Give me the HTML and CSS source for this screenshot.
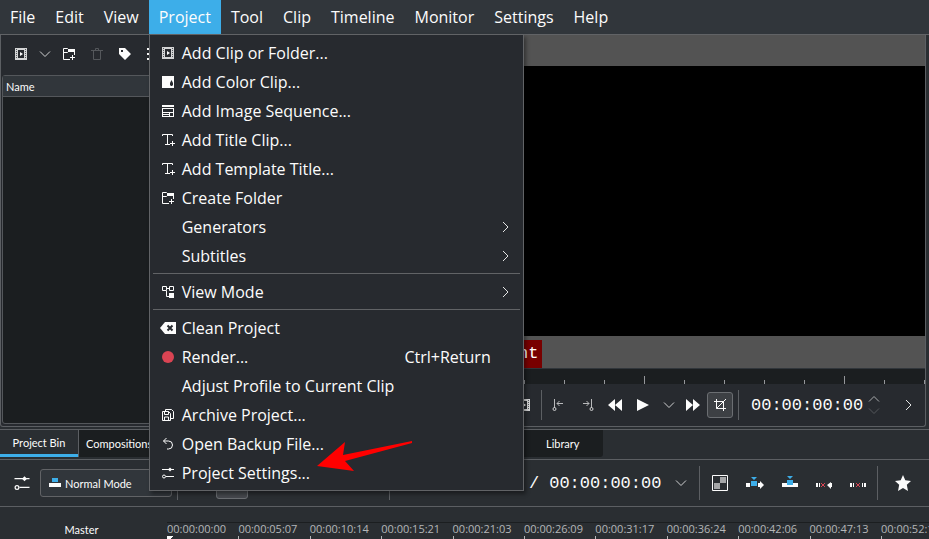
FILE: index.html
```
<!DOCTYPE html>
<html lang="en">
<head>
    <meta charset="UTF-8">
    <meta name="viewport" content="width=device-width, initial-scale=1.0">
    <title>Video Editor</title>
    <link rel="stylesheet" href="styles.css">
</head>
<body>

<!-- Shared icons -->
<svg class="sprite" aria-hidden="true">
    <symbol id="film" viewBox="0 0 16 16">
        <path fill="#d4d5d6" fill-rule="evenodd" d="M2 2h12v12H2zM5 4v8h6V4z"/>
        <path stroke="#55585c" stroke-dasharray="1 1" d="M3.500 3v10M12.500 3v10"/>
        <path fill="#fcfcfc" d="M7 6l3 2-3 2z"/>
    </symbol>
    <symbol id="color" viewBox="0 0 16 16">
        <path fill="#fcfcfc" d="M2 2h12v12H2z"/>
        <path fill="#272a2f" d="M11.500 6l1.500 3v2l-1 1h-1l-1-1V9z"/>
    </symbol>
    <symbol id="sequence" viewBox="0 0 16 16">
        <path fill="#fcfcfc" fill-rule="evenodd" d="M2 2h12v2H2zM2 5h12v9H2zM3 6v3h10V6zM3 10v1h6v-1zM3 12v1h6v-1zM10 10v3h3v-3z"/>
    </symbol>
    <symbol id="title" viewBox="0 0 16 16">
        <path fill="none" stroke="#fcfcfc" d="M2.500 4V2.500h10V4M7.500 2.500v10M5 12.500h5M12.500 9v5M10 11.500h5"/>
    </symbol>
    <symbol id="folder" viewBox="0 0 16 16">
        <path fill="none" stroke="#fcfcfc" d="M9 13.500H2.500v-11h4l2 2h5V9M2.500 6.500h4l2-2M11.500 9v5M9 11.500h5"/>
        <path fill="#fcfcfc" d="M7 3h7v3H7z"/>
    </symbol>
    <symbol id="tree" viewBox="0 0 16 16">
        <path fill="none" stroke="#fcfcfc" d="M2.500 2.500h4v4h-4zM9.500 2.500h4v4h-4zM6.500 4.500h3M6.500 7v5.500h3"/>
        <path fill="#fcfcfc" d="M9 9h5v5H9z"/>
    </symbol>
    <symbol id="clean" viewBox="0 0 16 16">
        <path fill="#fcfcfc" d="M0 8l5-6h11v12H5z"/>
        <path stroke="#272a2f" stroke-width="2" d="M7.500 5.500l5 5M12.500 5.500l-5 5"/>
    </symbol>
    <symbol id="record" viewBox="0 0 16 16"><circle cx="8" cy="8" r="6" fill="#da4453"/></symbol>
    <symbol id="archive" viewBox="0 0 16 16">
        <path fill="none" stroke="#fcfcfc" d="M2.500 4.500h6l2 2v7h-8zM4.500 4.500v3h4v-3M4.500 13v-3h4v3M5.500 4.500v-2h6l2 2v7h-3"/>
    </symbol>
    <symbol id="undo" viewBox="0 0 16 16">
        <path fill="none" stroke="#fcfcfc" d="M6.500 2L3.500 5l3 3M3.500 5h5a4 4 0 0 1 0 8H7"/>
    </symbol>
    <symbol id="sliders" viewBox="0 0 16 16">
        <path stroke="#fcfcfc" d="M2 4.500h12M6 11.500h8"/>
        <path fill="#fcfcfc" d="M8 4.500l2-2 2 2-2 2z"/>
        <circle cx="4" cy="11.500" r="1.500" fill="none" stroke="#fcfcfc"/>
    </symbol>
    <symbol id="down" viewBox="0 0 16 16"><path fill="none" stroke="#d0d1d2" d="M3 5.500l5 5 5-5"/></symbol>
    <symbol id="right" viewBox="0 0 16 16"><path fill="none" stroke="#e4e5e5" d="M6 3l5 5-5 5"/></symbol>
    <symbol id="trash" viewBox="0 0 16 16"><path fill="none" stroke="#54575b" d="M2 4.500h12M6.500 4V2.500h3V4M4.500 5v8.500h7V5"/></symbol>
    <symbol id="tag" viewBox="0 0 16 16"><path fill="#fcfcfc" fill-rule="evenodd" d="M2 2h6l6 6-6 6-6-6zM4 4v2h2V4z"/></symbol>
    <symbol id="dots" viewBox="0 0 16 16"><path fill="#fcfcfc" d="M6 2h3v2H6zM6 7h3v2H6zM6 12h3v2H6z"/></symbol>
    <symbol id="zone-in" viewBox="0 0 16 16">
        <path fill="none" stroke="#b9babc" d="M3.500 2v9M6 6.500h6M8.500 4L6 6.500 8.500 9"/>
        <circle cx="3.500" cy="12" r="1.500" fill="none" stroke="#d0d1d2"/>
    </symbol>
    <symbol id="zone-out" viewBox="0 0 16 16">
        <path fill="none" stroke="#b9babc" d="M12.500 2v9M4 6.500h6M7.500 4L10 6.500 7.500 9"/>
        <circle cx="12.500" cy="12" r="1.500" fill="none" stroke="#d0d1d2"/>
    </symbol>
    <symbol id="rewind" viewBox="0 0 16 16"><path fill="#fcfcfc" d="M8 2v12L1 8zM15 2v12L8 8z"/></symbol>
    <symbol id="forward" viewBox="0 0 16 16"><path fill="#fcfcfc" d="M1 2v12l7-6zM8 2v12l7-6z"/></symbol>
    <symbol id="play" viewBox="0 0 16 16"><path fill="#fcfcfc" d="M2 2v12l12-6z"/></symbol>
    <symbol id="crop" viewBox="0 0 16 16"><path fill="none" stroke="#fcfcfc" d="M4.500 2v9.500H14M2 4.500h9.500V14M4.500 11.500L14 2"/></symbol>
    <symbol id="mix" viewBox="0 0 16 16">
        <path fill="none" stroke="#fcfcfc" d="M.5.5h15v15H.5z"/>
        <path fill="#a5a6a8" d="M8 2h6v6H8zM2 8h6v6H2z"/>
    </symbol>
    <symbol id="insert" viewBox="0 0 18 16">
        <path fill="#fcfcfc" d="M0 8h4v4H0zM12 8h2V6l4 4-4 4v-2h-2z"/>
        <path fill="#3daee9" d="M5 6h6v5H5zM5 2h6L8 5z"/>
    </symbol>
    <symbol id="overwrite" viewBox="0 0 16 16">
        <path fill="#fcfcfc" d="M0 8h16v4H0z"/>
        <path fill="#3daee9" d="M5 5h6v5H5zM5 1h6L8 4z"/>
    </symbol>
    <symbol id="extract" viewBox="0 0 16 16">
        <path fill="#fcfcfc" d="M0 8h2v4H0zM3 8h1v4H3zM16 8h-1V7l-4 3 4 4v-2h1z"/>
        <path stroke="#da4453" d="M5 8l4 4M9 8l-4 4"/>
    </symbol>
    <symbol id="lift" viewBox="0 0 16 16">
        <path fill="#fcfcfc" d="M0 8h2v4H0zM3 8h1v4H3zM12 8h1v4h-1zM14 8h2v4h-2z"/>
        <path stroke="#da4453" d="M6 8l4 4M10 8l-4 4"/>
    </symbol>
    <symbol id="star" viewBox="0 0 16 16"><path fill="#fcfcfc" d="M8 0l2.300 5.200 5.700.7-4.200 3.900L13 16l-5-3-5 3 1.200-6.200L0 5.900l5.700-.7z"/></symbol>
</svg>

<nav class="menubar">
    <button>File</button>
    <button>Edit</button>
    <button>View</button>
    <div class="menu-holder">
        <button class="open" aria-expanded="true">Project</button>
        <div class="menu">
            <button><svg><use href="#film"/></svg>Add Clip or Folder...</button>
            <button><svg><use href="#color"/></svg>Add Color Clip...</button>
            <button><svg><use href="#sequence"/></svg>Add Image Sequence...</button>
            <button><svg><use href="#title"/></svg>Add Title Clip...</button>
            <button><svg><use href="#title"/></svg>Add Template Title...</button>
            <button><svg><use href="#folder"/></svg>Create Folder</button>
            <button><svg></svg>Generators<svg class="sub"><use href="#right"/></svg></button>
            <button><svg></svg>Subtitles<svg class="sub"><use href="#right"/></svg></button>
            <hr>
            <button><svg><use href="#tree"/></svg>View Mode<svg class="sub"><use href="#right"/></svg></button>
            <hr>
            <button><svg><use href="#clean"/></svg>Clean Project</button>
            <button><svg><use href="#record"/></svg>Render...<kbd>Ctrl+Return</kbd></button>
            <button><svg></svg>Adjust Profile to Current Clip</button>
            <button><svg><use href="#archive"/></svg>Archive Project...</button>
            <button><svg><use href="#undo"/></svg>Open Backup File...</button>
            <button><svg><use href="#sliders"/></svg>Project Settings...</button>
            <svg class="pointer" viewBox="0 0 96 36"><path fill="#f00" d="M0 25L28 1l-2 13L95 0v2L28 20l9 10z"/></svg>
        </div>
    </div>
    <button>Tool</button>
    <button>Clip</button>
    <button>Timeline</button>
    <button>Monitor</button>
    <button>Settings</button>
    <button>Help</button>
</nav>

<main class="workspace">
    <section class="bin">
        <div class="bin-tools">
            <button aria-label="Add clip"><svg><use href="#film"/></svg></button>
            <button aria-label="More clip types"><svg><use href="#down"/></svg></button>
            <button aria-label="Create folder"><svg><use href="#folder"/></svg></button>
            <button class="spaced" aria-label="Delete" disabled><svg><use href="#trash"/></svg></button>
            <button class="spaced" aria-label="Tags"><svg><use href="#tag"/></svg></button>
            <button aria-label="Options"><svg><use href="#dots"/></svg></button>
        </div>
        <div class="bin-list">
            <div class="bin-head">Name</div>
        </div>
    </section>
    <section class="monitor">
        <div class="screen">
            <div class="picture"></div>
            <div class="screen-foot"><span class="marker">nt</span></div>
        </div>
        <div class="monitor-ruler"></div>
        <div class="monitor-tools">
            <button aria-label="Clip zone"><svg><use href="#film"/></svg></button>
            <span class="divider"></span>
            <button aria-label="Set zone in"><svg><use href="#zone-in"/></svg></button>
            <button aria-label="Set zone out"><svg><use href="#zone-out"/></svg></button>
            <button aria-label="Rewind"><svg><use href="#rewind"/></svg></button>
            <button aria-label="Play"><svg><use href="#play"/></svg></button>
            <button class="narrow" aria-label="Play options"><svg><use href="#down"/></svg></button>
            <button class="narrow" aria-label="Forward"><svg><use href="#forward"/></svg></button>
            <button class="checked" aria-label="Crop"><svg><use href="#crop"/></svg></button>
            <span class="divider"></span>
            <input class="timecode" type="text" value="00:00:00:00" aria-label="Position">
            <span class="spin">
                <button aria-label="Next frame"><svg viewBox="0 0 12 8"><path fill="none" stroke="#a9abad" d="M1 6.500l5-5 5 5"/></svg></button>
                <button aria-label="Previous frame"><svg viewBox="0 0 12 8"><path fill="none" stroke="#54575b" d="M1 1.500l5 5 5-5"/></svg></button>
            </span>
            <button class="more" aria-label="More"><svg><use href="#right"/></svg></button>
        </div>
    </section>
</main>

<div class="tabs">
    <button class="tab active">Project Bin</button>
    <button class="tab">Compositions</button>
    <button class="tab library">Library</button>
</div>

<div class="timeline-tools">
    <button class="settings" aria-label="Timeline settings"><svg><use href="#sliders"/></svg></button>
    <div class="mode">
        <svg viewBox="0 0 12 12"><path fill="#fcfcfc" d="M0 6h12v4H0z"/><path fill="#3daee9" d="M3 1h6v4H3z"/></svg>
        <select aria-label="Edit mode"><option>Normal Mode</option></select>
    </div>
    <span class="divider"></span>
    <button class="tool-pressed" aria-label="Selection tool"></button>
    <span class="divider"></span>
    <div class="duration"><span>/</span><span>00:00:00:00</span></div>
    <button aria-label="Duration options"><svg><use href="#down"/></svg></button>
    <span class="divider"></span>
    <div class="edit-tools">
        <button aria-label="Mix clips"><svg><use href="#mix"/></svg></button>
        <button aria-label="Insert zone"><svg class="wide"><use href="#insert"/></svg></button>
        <button aria-label="Overwrite zone"><svg><use href="#overwrite"/></svg></button>
        <button aria-label="Extract zone"><svg><use href="#extract"/></svg></button>
        <button aria-label="Lift zone"><svg><use href="#lift"/></svg></button>
    </div>
    <span class="divider"></span>
    <button class="favorite" aria-label="Favorite effects"><svg><use href="#star"/></svg></button>
</div>

<div class="timeline">
    <div class="master">Master</div>
    <div class="timeline-ruler">
        <span class="playhead">00:00:00:00</span>
        <span>00:00:05:07</span>
        <span>00:00:10:14</span>
        <span>00:00:15:21</span>
        <span>00:00:21:03</span>
        <span>00:00:26:09</span>
        <span>00:00:31:17</span>
        <span>00:00:36:24</span>
        <span>00:00:42:06</span>
        <span>00:00:47:13</span>
        <span>00:00:52:19</span>
    </div>
</div>

</body>
</html>
```
FILE: styles.css
```
* {
    box-sizing: border-box;
}
body {
    margin: 0;
    height: 100vh;
    display: flex;
    flex-direction: column;
    overflow: hidden;
    background-color: #2a2e32;
    color: #fcfcfc;
    font-family: Lato, "Noto Sans", sans-serif;
    font-size: 11px;
}
button, input, select {
    margin: 0;
    padding: 0;
    border: 0;
    background: none;
    color: inherit;
    font: inherit;
}
svg {
    display: block;
    flex: none;
    width: 16px;
    height: 16px;
}
.sprite {
    position: absolute;
    width: 0;
    height: 0;
}
.divider {
    flex: none;
    width: 1px;
    height: 30px;
    background-color: #5c5f63;
}

/* Menu bar */
.menubar {
    flex: none;
    display: flex;
    height: 35px;
    border-bottom: 1px solid #616366;
    background-color: #31363b;
    font-family: "Open Sans", sans-serif;
    font-size: 16px;
}
.menubar > button, .menu-holder > button {
    height: 34px;
    padding: 0 10px;
}
.menu-holder {
    position: relative;
}
.menu-holder > .open {
    background-color: #3daee9;
}
.menu {
    position: absolute;
    z-index: 1;
    top: 100%;
    left: 0;
    width: 375px;
    padding: 3px;
    border: 1px solid #616366;
    background-color: #272a2f;
    box-shadow: 2px 3px 4px rgba(0, 0, 0, 0.4);
}
.menu button {
    display: flex;
    align-items: center;
    gap: 6px;
    width: 100%;
    height: 29px;
    padding: 0 7px;
}
.menu button:hover {
    background-color: #3daee9;
}
.menu .sub {
    margin-left: auto;
}
.menu kbd {
    margin-left: auto;
    padding-right: 22px;
    font: inherit;
}
.menu hr {
    height: 1px;
    margin: 3px 0;
    border: 0;
    background-color: #616366;
}
.pointer {
    position: absolute;
    right: 110px;
    bottom: 13px;
    width: 96px;
    height: 36px;
}

/* Bin and monitor */
.workspace {
    flex: 1;
    display: flex;
    min-height: 0;
    margin-bottom: 2px;
    padding-right: 3px;
}
.bin {
    display: flex;
    flex-direction: column;
    width: 323px;
    padding: 0 2px 2px 1px;
    border: 1px solid #5c5f63;
    border-top: 0;
    border-radius: 0 0 3px 3px;
    background-color: #272a2f;
}
.bin-tools {
    display: flex;
    align-items: center;
    gap: 8px;
    height: 40px;
    padding: 0 0 2px 11px;
}
.bin-tools .spaced {
    margin-left: 4px;
}
.bin-list {
    flex: 1;
    border: 1px solid #54575b;
    border-radius: 3px;
    background-color: #1b1e20;
}
.bin-head {
    height: 21px;
    padding-left: 3px;
    border-bottom: 1px solid #54575b;
    background-color: #31363b;
    line-height: 21px;
}
.monitor {
    flex: 1;
    display: flex;
    flex-direction: column;
    border-right: 1px solid #5c5f63;
    border-bottom: 1px solid #5c5f63;
    border-radius: 0 0 3px 0;
    background-color: #272a2f;
}
.screen {
    flex: 1;
    display: flex;
    flex-direction: column;
    padding-top: 31px;
    background-color: #535353;
}
.picture {
    flex: 1;
    background-color: #000;
}
.screen-foot {
    display: flex;
    height: 32px;
    padding: 4px 0 0 190px;
}
.marker {
    padding: 0 4px 0 5px;
    background-color: #780000;
    font: 17px/28px "Liberation Mono", monospace;
}
.monitor-ruler {
    height: 16px;
    border-top: 1px solid #31363b;
    background-color: #1b1e20;
    background-image:
        linear-gradient(to right, #94969a 1px, transparent 1px),
        linear-gradient(to right, #94969a 1px, transparent 1px);
    background-position: 121px 7px, 1px 11px;
    background-size: 200px 8px, 40px 4px;
    background-repeat: repeat-x;
}
.monitor-tools {
    display: flex;
    align-items: center;
    justify-content: flex-end;
    gap: 12px;
    height: 42px;
    padding-right: 9px;
}
.monitor-tools .divider {
    margin: 0 -3px;
}
.monitor-tools .narrow {
    margin: 0 -2px;
}
.monitor-tools .checked {
    padding: 4px;
    margin-left: -4px;
    margin-right: -4px;
    border: 1px solid #6b6e72;
    border-radius: 3px;
    background-color: #3d4044;
}
.timecode {
    width: 113px;
    font: 17px "Liberation Mono", monospace;
}
.monitor-tools .timecode {
    margin-left: 3px;
}
.spin {
    display: flex;
    flex-direction: column;
    gap: 4px;
    margin-left: -8px;
}
.spin button, .spin svg {
    display: block;
    width: 12px;
    height: 8px;
}
.more {
    margin-left: 8px;
}

/* Dock tabs */
.tabs {
    flex: none;
    display: flex;
    height: 31px;
    padding-bottom: 2px;
    border-top: 1px solid #5c5f63;
    border-bottom: 1px solid #5c5f63;
}
.tab {
    min-width: 78px;
    padding: 0 7px;
    border-left: 1px solid #5c5f63;
    background-color: #1b1e20;
}
.tab.active {
    border-left: 0;
    border-bottom: 3px solid #3daee9;
    background-color: #2a2e32;
}
.library {
    width: 82px;
    margin-left: 362px;
    border-radius: 0 0 3px 0;
}

/* Timeline toolbar */
.timeline-tools {
    flex: none;
    display: flex;
    align-items: center;
    height: 47px;
    border-bottom: 1px solid #5c5f63;
}
.timeline-tools .divider {
    height: 34px;
}
.settings {
    margin: 0 8px 0 12px;
}
.settings svg {
    width: 20px;
    height: 20px;
}
.mode {
    display: flex;
    align-items: center;
    width: 132px;
    height: 28px;
    margin-right: 5px;
    padding-left: 8px;
    border: 1px solid #616366;
    border-radius: 3px;
    background-color: #31363b;
}
.mode svg {
    width: 12px;
    height: 12px;
}
.mode select {
    flex: 1;
    height: 26px;
    padding-left: 4px;
    appearance: none;
}
.tool-pressed {
    width: 32px;
    height: 32px;
    margin: 0 141px 0 38px;
    border: 1px solid #6b6e72;
    border-radius: 3px;
    background-color: #45484d;
}
.duration {
    display: flex;
    gap: 10px;
    margin: 0 12px 0 139px;
    font: 17px "Liberation Mono", monospace;
}
.duration + button {
    margin-right: 10px;
}
.edit-tools {
    display: flex;
    gap: 18px;
    margin: 0 11px 0 12px;
}
.edit-tools .wide {
    width: 18px;
}
.favorite {
    margin-left: 17px;
}

/* Timeline */
.timeline {
    flex: none;
    display: flex;
    height: 32px;
    padding-top: 15px;
}
.master {
    width: 167px;
    padding-right: 4px;
    text-align: center;
    line-height: 15px;
}
.timeline-ruler {
    flex: 1;
    display: flex;
    justify-content: space-between;
    margin-right: -11px;
    border-top: 1px solid #1b1e20;
    color: #b4b6b8;
    font-family: "Open Sans", sans-serif;
    line-height: 12px;
}
.timeline-ruler span {
    height: 16px;
    background: linear-gradient(#b4b6b8, #b4b6b8) left bottom / 1px 3px no-repeat;
}
.timeline-ruler .playhead {
    background: linear-gradient(135deg, #fcfcfc 60%, transparent 60%) left bottom / 8px 3px no-repeat;
}
```
